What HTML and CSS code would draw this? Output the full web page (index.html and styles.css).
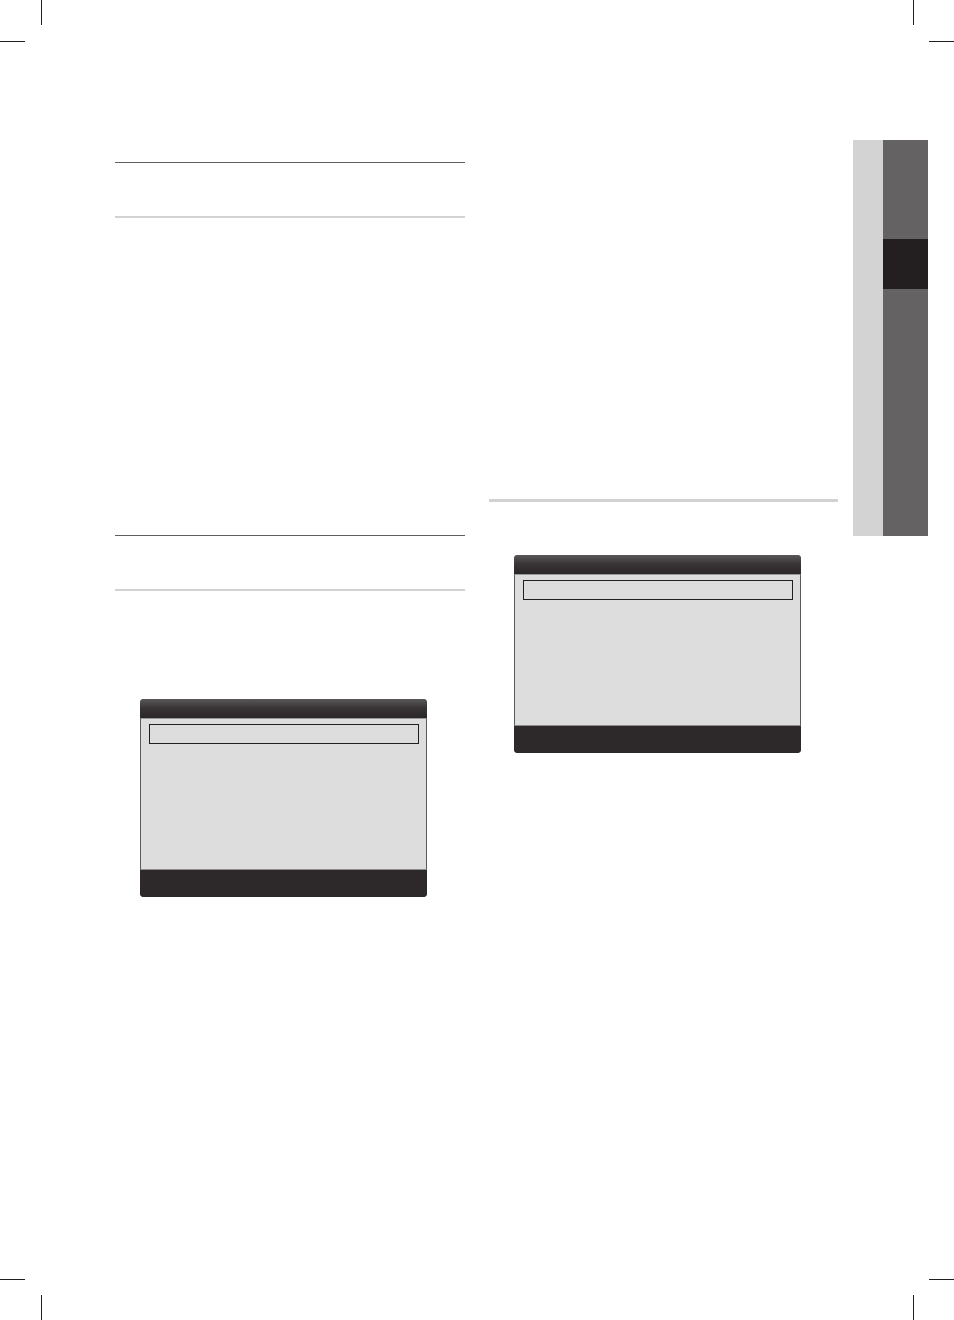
FILE: index.html
```html
<!DOCTYPE html>
<html lang="en">
<head>
    <meta charset="UTF-8">
    <meta name="viewport" content="width=device-width, initial-scale=1.0">
    <title>Manual page</title>
    <link rel="stylesheet" href="styles.css">
</head>
<body>
    <div class="page">
        <!-- crop marks -->
        <span class="mark mark-v mark-tl-v"></span>
        <span class="mark mark-h mark-tl-h"></span>
        <span class="mark mark-v mark-tr-v"></span>
        <span class="mark mark-h mark-tr-h"></span>
        <span class="mark mark-v mark-bl-v"></span>
        <span class="mark mark-h mark-bl-h"></span>
        <span class="mark mark-v mark-br-v"></span>
        <span class="mark mark-h mark-br-h"></span>

        <div class="columns">
            <div class="col col-left">
                <div class="section-head"></div>
                <div class="section-body"></div>
                <div class="section-head"></div>

                <div class="osd osd-left">
                    <div class="osd-header"></div>
                    <div class="osd-body">
                        <div class="osd-item"></div>
                    </div>
                    <div class="osd-footer"></div>
                </div>
            </div>

            <div class="col col-right">
                <div class="section-rule"></div>

                <div class="osd osd-right">
                    <div class="osd-header"></div>
                    <div class="osd-body">
                        <div class="osd-item"></div>
                    </div>
                    <div class="osd-footer"></div>
                </div>
            </div>

            <div class="side-tab">
                <div class="tab-light"></div>
                <div class="tab-dark">
                    <div class="tab-seg tab-top"></div>
                    <div class="tab-seg tab-active"></div>
                    <div class="tab-seg tab-rest"></div>
                </div>
            </div>
        </div>
    </div>
</body>
</html>
```

FILE: styles.css
```css
body {
    margin: 0;
    background-color: #ffffff;
    font-family: 'Liberation Sans', Arial, sans-serif;
}
.page {
    position: relative;
    width: 954px;
    height: 1320px;
    overflow: hidden;
}

/* crop marks */
.mark {
    position: absolute;
    background-color: #231f20;
}
.mark-v {
    width: 1px;
    height: 25px;
}
.mark-h {
    width: 25px;
    height: 1px;
}
.mark-tl-v { left: 41px; top: 0; }
.mark-tl-h { left: 0; top: 41px; }
.mark-tr-v { left: 913px; top: 0; }
.mark-tr-h { left: 929px; top: 41px; }
.mark-bl-v { left: 41px; top: 1295px; }
.mark-bl-h { left: 0; top: 1279px; }
.mark-br-v { left: 913px; top: 1295px; }
.mark-br-h { left: 929px; top: 1279px; }

.columns {
    display: flex;
    align-items: flex-start;
    padding: 140px 0 0 115px;
}
.col-left {
    width: 350px;
    padding-top: 22px;
}
.col-right {
    width: 349px;
    margin-left: 24px;
    padding-top: 359px;
}

.section-head {
    height: 53px;
    border-top: 1px solid #5e5e5e;
    border-bottom: 2px solid #d2d2d2;
}
.section-body {
    height: 317px;
}
.section-rule {
    height: 3px;
    background-color: #d2d2d2;
}

/* on-screen menu boxes */
.osd {
    width: 287px;
    margin-left: 25px;
    display: flex;
    flex-direction: column;
    border-radius: 4px;
    overflow: hidden;
    background-color: #2d292a;
}
.osd-left {
    margin-top: 108px;
}
.osd-right {
    margin-top: 53px;
}
.osd-header {
    height: 19px;
    background: linear-gradient(to bottom, #5a5858 0%, #3a3637 45%, #2a2627 100%);
}
.osd-body {
    height: 152px;
    background-color: #dddddd;
    border-left: 1px solid #5a5a5a;
    border-right: 1px solid #5a5a5a;
    border-top: 1px solid #9a9a9a;
    border-bottom: 1px solid #8a8a8a;
    padding: 5px 7px 0 8px;
    box-sizing: border-box;
}
.osd-item {
    height: 20px;
    border: 1px solid #231f20;
    box-sizing: border-box;
}
.osd-footer {
    height: 27px;
    background-color: #2d292a;
}

/* chapter tab */
.side-tab {
    display: flex;
    margin-left: 15px;
    height: 396px;
}
.tab-light {
    width: 30px;
    background-color: #d3d3d3;
}
.tab-dark {
    width: 45px;
    display: flex;
    flex-direction: column;
}
.tab-top {
    height: 99px;
    background-color: #646262;
}
.tab-active {
    height: 50px;
    background-color: #231f20;
}
.tab-rest {
    flex: 1;
    background-color: #646262;
}
```
